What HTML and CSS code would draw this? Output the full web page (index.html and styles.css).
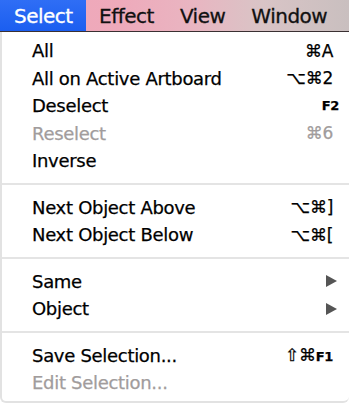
FILE: index.html
```html
<!DOCTYPE html>
<html>
<head>
    <title>Select Menu</title>
    <link rel="stylesheet" href="styles.css">
</head>
<body>
    <div class="menubar">
        <div class="menubar-item active">Select</div>
        <div class="menubar-item">Effect</div>
        <div class="menubar-item">View</div>
        <div class="menubar-item">Window</div>
    </div>

    <ul class="menu">
        <li class="item"><span>All</span><span class="key">&#8984;A</span></li>
        <li class="item"><span>All on Active Artboard</span><span class="key">&#8997;&#8984;2</span></li>
        <li class="item"><span>Deselect</span><span class="key fkey">F2</span></li>
        <li class="item disabled"><span>Reselect</span><span class="key">&#8984;6</span></li>
        <li class="item"><span>Inverse</span></li>
        <li class="separator"></li>
        <li class="item"><span>Next Object Above</span><span class="key">&#8997;&#8984;]</span></li>
        <li class="item"><span>Next Object Below</span><span class="key">&#8997;&#8984;[</span></li>
        <li class="separator"></li>
        <li class="item submenu"><span>Same</span><span class="arrow"></span></li>
        <li class="item submenu"><span>Object</span><span class="arrow"></span></li>
        <li class="separator"></li>
        <li class="item"><span>Save Selection...</span><span class="key">&#8679;&#8984;<span class="fkey">F1</span></span></li>
        <li class="item disabled"><span>Edit Selection...</span></li>
    </ul>
</body>
</html>
```

FILE: styles.css
```css
* {
    margin: 0;
    padding: 0;
    box-sizing: border-box;
}

html, body {
    width: 100%;
    height: 100%;
    overflow: hidden;
}

body {
    background-color: #ffffff;
    font-family: "DejaVu Sans", Verdana, sans-serif;
    color: #000000;
}

.menubar {
    display: flex;
    height: 32px;
    border-bottom: 1px solid #3a3032;
    background: linear-gradient(90deg, #f0a6b8 0%, #eeaabb 35%, #e9b5c1 55%, #d9c4c6 75%, #c9bfbf 100%);
}

.menubar-item {
    display: flex;
    align-items: center;
    height: 31px;
    padding: 0 13px;
    font-size: 20px;
    color: #111111;
    letter-spacing: -0.5px;
    -webkit-text-stroke: 0.3px #111111;
}

.menubar-item.active {
    width: 86px;
    padding-left: 14px;
    margin-right: 0;
    color: #ffffff;
    -webkit-text-stroke: 0.3px #ffffff;
    background: linear-gradient(180deg, #2f6ef5 0%, #1b5ef0 100%);
}

.menu {
    list-style: none;
    padding-top: 5px;
    height: 371px;
    border-left: 2px solid #e2e2e2;
    border-bottom: 2px solid #e2e2e2;
    border-radius: 0 0 6px 6px;
}

.item {
    display: flex;
    justify-content: space-between;
    align-items: center;
    height: 27.5px;
    padding: 0 16px 0 30px;
    font-size: 18px;
    letter-spacing: -0.3px;
    -webkit-text-stroke: 0.25px #000000;
}

.item.disabled {
    color: #a19c9c;
    -webkit-text-stroke: 0.25px #a19c9c;
}

.key {
    font-size: 17px;
}

.fkey {
    font-size: 13px;
    font-weight: bold;
}

.item .key.fkey {
    margin-right: -6px;
}

.separator {
    height: 19px;
    display: flex;
    align-items: center;
}

.separator::after {
    content: "";
    display: block;
    width: 100%;
    height: 2px;
    background-color: #e4e4e4;
}

.submenu {
    padding-right: 12px;
}

.arrow {
    width: 0;
    height: 0;
    border-top: 6px solid transparent;
    border-bottom: 6px solid transparent;
    border-left: 11px solid #555555;
}
```
